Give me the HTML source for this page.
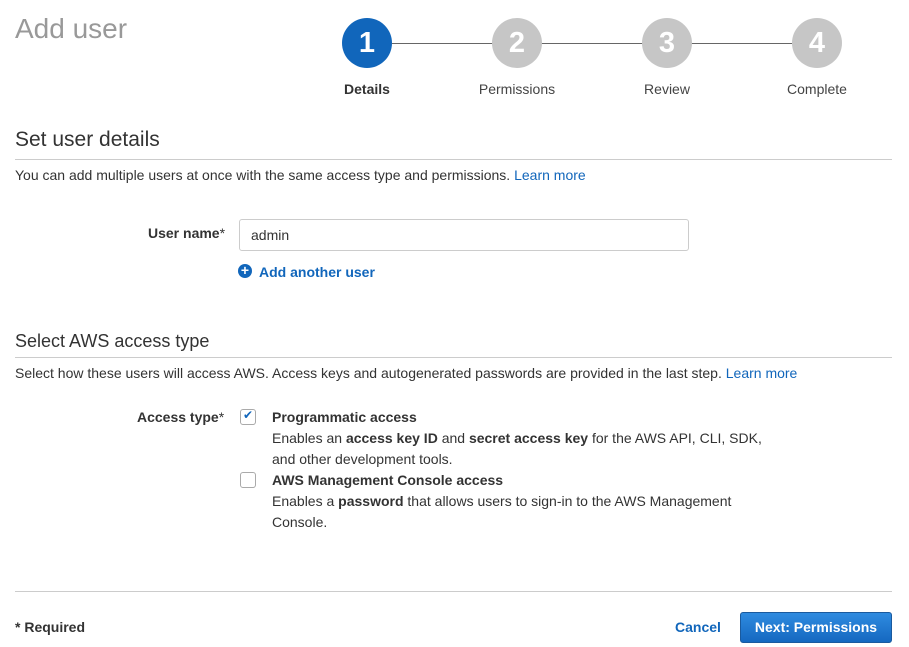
<!DOCTYPE html>
<html><head><meta charset="utf-8"><style>
body{margin:0;width:909px;height:647px;background:#fff;font-family:"Liberation Sans",Arial,sans-serif;color:#333;position:relative;overflow:hidden}
.a{position:absolute;white-space:nowrap}
.circ{position:absolute;width:50px;height:50px;border-radius:50%;color:#fff;font-weight:bold;font-size:29px;text-align:center;line-height:50px;background:#c6c6c6}
.lbl{position:absolute;font-size:14px;width:120px;text-align:center;color:#444}
.hr{position:absolute;left:15px;width:877px;height:1px;background:#ccc}
.link{color:#1166bb}
.cb{position:absolute;width:14px;height:14px;border:1px solid #aaa;border-radius:3px;background:#fff}
.t{font-size:14px}
</style></head><body>
<div class="a" style="left:15px;top:13px;font-size:28px;color:#999">Add user</div>
<div class="a" style="left:392px;top:43px;width:400px;height:1px;background:#666"></div>
<div class="circ" style="left:342px;top:18px;background:#1166bb">1</div>
<div class="circ" style="left:492px;top:18px">2</div>
<div class="circ" style="left:642px;top:18px">3</div>
<div class="circ" style="left:792px;top:18px">4</div>
<div class="lbl" style="left:307px;top:81px;font-weight:bold;color:#333">Details</div>
<div class="lbl" style="left:457px;top:81px">Permissions</div>
<div class="lbl" style="left:607px;top:81px">Review</div>
<div class="lbl" style="left:757px;top:81px">Complete</div>

<div class="a" style="left:15px;top:128px;font-size:21px">Set user details</div>
<div class="hr" style="top:159px"></div>
<div class="a t" style="left:15px;top:167px">You can add multiple users at once with the same access type and permissions. <span class="link">Learn more</span></div>
<div class="a t" style="left:148px;top:225px;font-weight:bold">User name<span style="font-weight:normal">*</span></div>
<div class="a" style="left:239px;top:219px;width:448px;height:30px;border:1px solid #ccc;border-radius:3px"></div>
<div class="a t" style="left:251px;top:227px">admin</div>
<div class="a" style="left:238px;top:264px;width:14px;height:14px;border-radius:50%;background:#1166bb;color:#fff;font-size:14px;line-height:13px;text-align:center;font-weight:bold">+</div>
<div class="a t" style="left:259px;top:264px;font-weight:bold;color:#1166bb">Add another user</div>

<div class="a" style="left:15px;top:331px;font-size:18px">Select AWS access type</div>
<div class="hr" style="top:357px"></div>
<div class="a t" style="left:15px;top:365px">Select how these users will access AWS. Access keys and autogenerated passwords are provided in the last step. <span class="link">Learn more</span></div>
<div class="a t" style="left:137px;top:409px;font-weight:bold">Access type<span style="font-weight:normal">*</span></div>
<div class="cb" style="left:240px;top:409px"><span style="position:absolute;left:2px;top:-2px;color:#1166bb;font-size:12px">✔</span></div>
<div class="a t" style="left:272px;top:409px;font-weight:bold">Programmatic access</div>
<div class="a t" style="left:272px;top:428px;line-height:21px">Enables an <b>access key ID</b> and <b>secret access key</b> for the AWS API, CLI, SDK,<br>and other development tools.</div>
<div class="cb" style="left:240px;top:472px"></div>
<div class="a t" style="left:272px;top:472px;font-weight:bold">AWS Management Console access</div>
<div class="a t" style="left:272px;top:491px;line-height:21px">Enables a <b>password</b> that allows users to sign-in to the AWS Management<br>Console.</div>

<div class="hr" style="top:591px"></div>
<div class="a t" style="left:15px;top:619px;font-weight:bold">* Required</div>
<div class="a t" style="left:675px;top:619px;font-weight:bold;color:#1166bb">Cancel</div>
<div class="a" style="left:740px;top:612px;width:150px;height:29px;border:1px solid #1a5a9e;border-radius:3px;background:linear-gradient(#2f8be0,#1568c0);color:#fff;font-weight:bold;font-size:14px;text-align:center;line-height:29px">Next: Permissions</div>
</body></html>
